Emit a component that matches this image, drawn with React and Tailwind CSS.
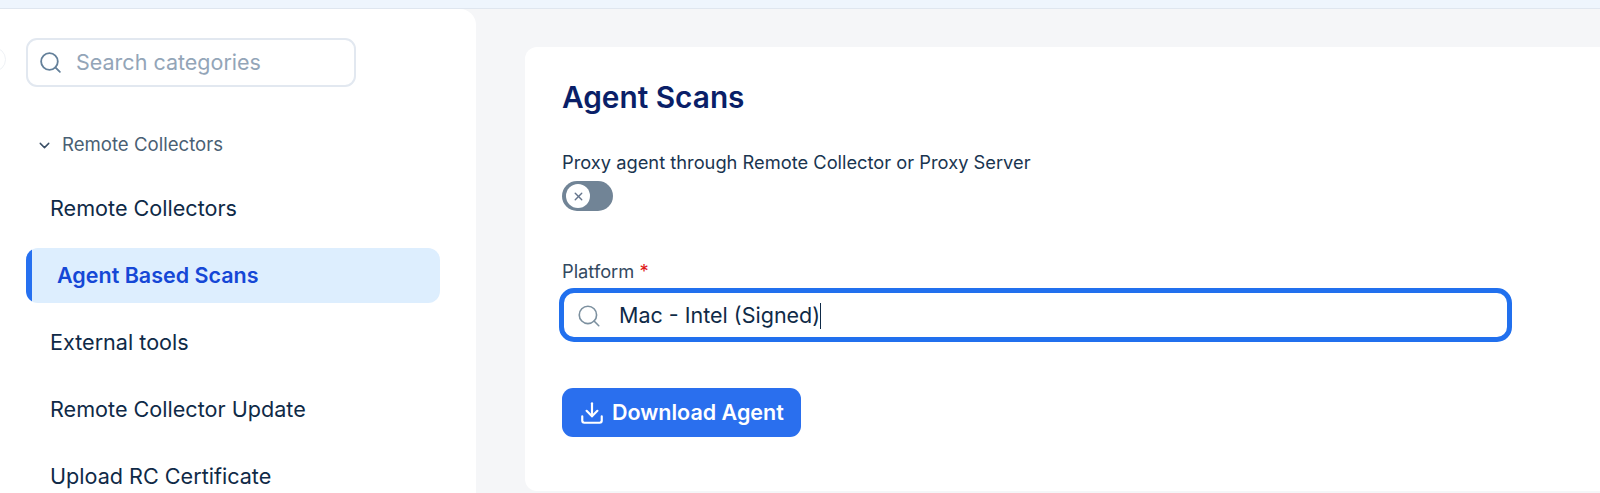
import React from 'react';
import { Search, ChevronDown, X, Download } from 'lucide-react';

const navItems = ['Remote Collectors', 'Agent Based Scans', 'External tools', 'Remote Collector Update', 'Upload RC Certificate'];

const NavItem = ({ label }) => {
    if (label === 'Agent Based Scans') {
        return (
            <div className="relative h-[55px] shrink-0 flex items-center overflow-hidden rounded-[12px] bg-[#ddeefe] pl-[31px] text-[21.5px] font-semibold text-[#1547d6]">
                <span className="absolute left-0 top-0 bottom-0 w-[6px] bg-[#2670f0]" />
                {label}
            </div>
        );
    }
    return (
        <div className="h-[55px] shrink-0 flex items-center pl-[24px] text-[21.6px] font-normal text-[#0f2a47]">
            {label}
        </div>
    );
};

const Sidebar = () => (
    <aside className="relative w-[476px] shrink-0 h-[484px] overflow-hidden bg-white rounded-tr-[16px] pl-[26px] pr-[36px] pt-[29px]">
        <div className="absolute left-[-19px] top-[38px] w-[25px] h-[25px] rounded-full bg-white border border-[#eef1f5]" />
        <div className="h-[49px] w-[330px] flex items-center gap-[13px] pl-[10px] rounded-[11px] border-2 border-[#e2e8f0]">
            <Search size={25} strokeWidth={1.75} className="text-[#64809a]" />
            <span className="text-[21.5px] text-[#93a5b8]">Search categories</span>
        </div>
        <div className="flex items-center gap-[9px] pl-[10px] mt-[46px] h-[24px] text-[18.6px] text-[#4a5f74]">
            <ChevronDown size={17} strokeWidth={2} className="text-[#3a4f66]" />
            <span>Remote Collectors</span>
        </div>
        <nav className="flex flex-col gap-[12px] mt-[24px]">
            {navItems.map((label) => (
                <NavItem key={label} label={label} />
            ))}
        </nav>
    </aside>
);

const AgentCard = () => (
    <section className="flex-1 h-[444px] bg-white rounded-l-[12px] pl-[37px] pt-[30px]">
        <h1 className="text-[29.8px] leading-[40px] font-semibold text-[#0a1f68]">Agent Scans</h1>
        <p className="mt-[33px] text-[18.3px] leading-[24px] text-[#1a3550]">Proxy agent through Remote Collector or Proxy Server</p>
        <div className="mt-[7px] w-[51px] h-[30px] rounded-full bg-[#718496] flex items-center pl-[4px]">
            <div className="w-[24px] h-[24px] rounded-full bg-white flex items-center justify-center">
                <X size={13} strokeWidth={2.5} className="text-[#64748b]" />
            </div>
        </div>
        <div className="mt-[48px] text-[18.3px] leading-[24px] text-[#33495f]">
            Platform <span className="text-[#e01b1b]">*</span>
        </div>
        <div className="mt-[5px] -ml-[3px] w-[953px] h-[54px] flex items-center rounded-[15px] border-[5px] border-[#2170ee] pl-[12px] pt-px bg-white">
            <Search size={26} strokeWidth={1.5} className="text-[#7c909f]" />
            <span className="ml-[17px] text-[21.5px] text-[#0f2a47]">Mac - Intel (Signed)</span>
            <span className="w-px h-[26px] bg-[#0f2a47]" />
        </div>
        <button className="mt-[46px] w-[239px] h-[49px] flex items-center gap-[7px] pl-[17px] rounded-[11px] bg-[#2a6fee] text-[21.5px] font-semibold text-white">
            <Download size={26} strokeWidth={2} />
            Download Agent
        </button>
    </section>
);

export default function App() {
    return (
        <div className="w-[1600px] h-[493px] overflow-hidden bg-[#f5f6f8] font-['Inter',sans-serif]">
            <div className="h-[9px] bg-[#eef5fd] border-b border-[#dfe6ef]" />
            <div className="flex items-start">
                <Sidebar />
                <main className="flex-1 flex pl-[49px] pt-[38px]">
                    <AgentCard />
                </main>
            </div>
        </div>
    );
}
